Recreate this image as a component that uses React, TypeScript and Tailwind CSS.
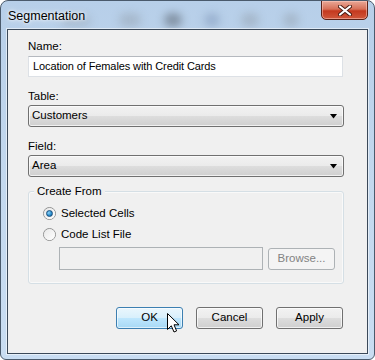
const font = "font-['Liberation_Sans',Arial,sans-serif]";

function Radio({ checked, label }: { checked?: boolean; label: string }) {
  return (
    <div className="flex items-center h-[21px]">
      <span className="ml-[14px] w-[13px] h-[13px] rounded-full border border-[#8e8f8f] bg-gradient-to-br from-[#c9c9c9] to-[#f4f4f4] flex items-center justify-center shrink-0">
        <span className="w-[11px] h-[11px] rounded-full bg-gradient-to-br from-[#e8e8e8] to-[#ffffff] flex items-center justify-center">
          {checked && (
            <span className="w-[7px] h-[7px] rounded-full border border-[#1a4f7d] bg-[radial-gradient(circle_at_35%_35%,#8ed3f8,#2a8fcf_55%,#0f5a92)]" />
          )}
        </span>
      </span>
      <span className="ml-[5px] text-[11.5px] text-black leading-none">{label}</span>
    </div>
  );
}

function Select({ value }: { value: string }) {
  return (
    <div className="w-[316px] h-[22px] rounded-[3px] border border-[#707070] bg-[linear-gradient(#f2f2f2_0%,#ebebeb_48%,#dddddd_52%,#cfcfcf_100%)] shadow-[inset_0_0_0_1px_rgba(255,255,255,0.7)] flex items-center justify-between pl-[3px] pr-[5px]">
      <span className="text-[11.5px] text-black leading-none">{value}</span>
      <svg width="8" height="5" viewBox="0 0 8 5">
        <path d="M0 0H7L3.5 4.5Z" fill="#000" />
      </svg>
    </div>
  );
}

function Button({ label, hover }: { label: string; hover?: boolean }) {
  return (
    <div
      className={
        hover
          ? "w-[67px] h-[22px] rounded-[3px] border border-[#3c7fb1] bg-[linear-gradient(#eaf6fd_0%,#d9f0fc_48%,#bee6fd_52%,#a7d9f5_100%)] shadow-[inset_0_0_0_1px_rgba(255,255,255,0.6)] flex items-center justify-center text-[11.5px] text-black"
          : "w-[67px] h-[22px] rounded-[3px] border border-[#707070] bg-[linear-gradient(#f2f2f2_0%,#ebebeb_48%,#dddddd_52%,#cfcfcf_100%)] shadow-[inset_0_0_0_1px_rgba(255,255,255,0.7)] flex items-center justify-center text-[11.5px] text-black"
      }
    >
      {label}
    </div>
  );
}

export default function App() {
  return (
    <div className={`w-[375px] h-[360px] bg-white ${font}`}>
      <div className="relative w-full h-full rounded-t-[8px] rounded-b-[6px] border border-[#4a5a6c] bg-gradient-to-b from-[#b7cfe9] via-[#c3d8ee] to-[#c9ddf2] flex flex-col px-[6px] pb-[5px] overflow-hidden">
        {/* blurred glass behind the title bar */}
        <div className="absolute left-[118px] top-[12px] w-[22px] h-[14px] rounded-full bg-[#8d98a4] opacity-40 blur-[4px]" />
        <div className="absolute left-[163px] top-[12px] w-[18px] h-[14px] rounded-full bg-[#4d5661] opacity-50 blur-[4px]" />
        <div className="absolute left-[203px] top-[12px] w-[16px] h-[14px] rounded-full bg-[#7d95b8] opacity-50 blur-[4px]" />
        <div className="absolute left-[240px] top-[12px] w-[18px] h-[14px] rounded-full bg-[#8a949e] opacity-40 blur-[4px]" />
        <div className="absolute left-[282px] top-[12px] w-[16px] h-[14px] rounded-full bg-[#8a949e] opacity-40 blur-[4px]" />
        <div className="absolute left-[60px] top-[14px] w-[30px] h-[12px] rounded-full bg-[#8a949e] opacity-30 blur-[4px]" />

        <div className="relative h-[28px] flex items-start justify-between shrink-0">
          <span className="mt-[6px] ml-[1px] text-[12.5px] text-black [text-shadow:0_0_6px_#fff,0_0_3px_#fff]">
            Segmentation
          </span>
          <div className="-mt-px w-[47px] h-[20px] rounded-b-[5px] border border-[#5a2218] bg-[linear-gradient(#e9a897_0%,#d77058_45%,#c4391f_55%,#d0583c_100%)] shadow-[inset_0_0_0_1px_rgba(255,210,200,0.5)] flex items-center justify-center">
            <svg width="14" height="11" viewBox="0 0 14 11">
              <path d="M2 1.5L12 9.5M12 1.5L2 9.5" stroke="#4a1c12" strokeWidth="4" strokeLinecap="round" />
              <path d="M2 1.5L12 9.5M12 1.5L2 9.5" stroke="#fff" strokeWidth="2.2" strokeLinecap="round" />
            </svg>
          </div>
        </div>

        <div className="relative flex-1 border border-[#3b4959] bg-[#f0f0f0] shadow-[0_0_0_1px_rgba(255,255,255,0.55)] pl-[20px] flex flex-col">
          <div className="mt-[9px] text-[11.5px] leading-[15px] text-black">Name:</div>
          <div className="mt-[2px] w-[315px] h-[21px] border border-[#dde1e6] border-t-[#b5b9bf] bg-white flex items-center pl-[4px] text-[11px] tracking-[-0.1px] text-black">
            Location of Females with Credit Cards
          </div>
          <div className="mt-[12px] text-[11.5px] leading-[15px] text-black">Table:</div>
          <div className="mt-[1px]">
            <Select value="Customers" />
          </div>
          <div className="mt-[12px] text-[11.5px] leading-[15px] text-black">Field:</div>
          <div className="mt-[1px]">
            <Select value="Area" />
          </div>

          <div className="relative mt-[14px] w-[316px] h-[93px] rounded-[3px] border border-[#d5dfe5] shadow-[inset_0_0_0_1px_rgba(255,255,255,0.6)] pt-[11px]">
            <span className="absolute left-[5px] -top-[8px] bg-[#f0f0f0] px-[3px] text-[11.5px] leading-[15px] text-black">
              Create From
            </span>
            <Radio checked label="Selected Cells" />
            <Radio label="Code List File" />
            <div className="mt-[2px] ml-[30px] flex items-center gap-[5px]">
              <div className="w-[204px] h-[23px] border border-[#adb2b5] bg-[#f0f0f0]" />
              <div className="w-[67px] h-[22px] rounded-[3px] border border-[#adb2b5] bg-[#f4f4f4] flex items-center justify-center text-[11.5px] text-[#838383]">
                Browse...
              </div>
            </div>
          </div>

          <div className="mt-[23px] flex gap-[13px] pl-[88px]">
            <Button label="OK" hover />
            <Button label="Cancel" />
            <Button label="Apply" />
          </div>

          <svg className="absolute left-[159px] top-[283px]" width="13" height="20" viewBox="0 0 13 20">
            <path d="M0.5 0.5V16.5L4.3 12.8L7 19L9.6 17.9L7 11.8H12Z" fill="#fff" stroke="#000" strokeWidth="1" strokeLinejoin="miter" />
          </svg>
        </div>
      </div>
    </div>
  );
}
